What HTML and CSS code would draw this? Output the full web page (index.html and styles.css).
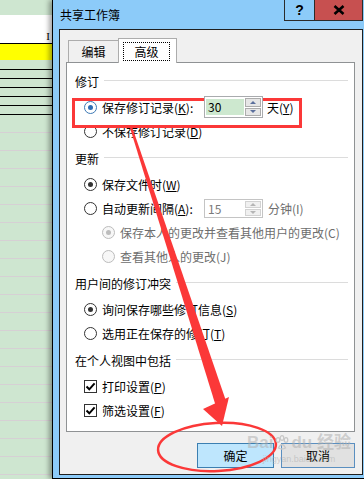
FILE: index.html
```html
<!DOCTYPE html>
<html lang="zh-CN">

<head>
    <meta charset="UTF-8">
    <meta name="viewport" content="width=device-width, initial-scale=1.0">
    <title>共享工作簿</title>
    <link rel="stylesheet" href="styles.css">
</head>

<body>
<div class="screen">

    <!-- worksheet behind the dialog -->
    <div class="sheet">
        <div class="sh-top"></div>
        <div class="sh-name"><span>I</span></div>
        <div class="sh-yellow"></div>
        <div class="sh-row first"></div>
        <div class="sh-row"></div>
        <div class="sh-row"></div>
        <div class="sh-row"></div>
        <div class="sh-row"></div>
        <div class="sh-row"></div>
        <div class="sh-line"></div>
        <div class="sh-line"></div>
        <div class="sh-line"></div>
        <div class="sh-line"></div>
        <div class="sh-line"></div>
        <div class="sh-line"></div>
        <div class="sh-line"></div>
        <div class="sh-line"></div>
        <div class="sh-line"></div>
        <div class="sh-line"></div>
        <div class="sh-line"></div>
        <div class="sh-line"></div>
        <div class="sh-line"></div>
        <div class="sh-line"></div>
        <div class="sh-line"></div>
        <div class="sh-line"></div>
        <div class="sh-line"></div>
        <div class="sh-line"></div>
        <div class="sh-line"></div>
        <div class="sh-line"></div>
    </div>

    <div class="dialog">
        <div class="titlebar">
            <span class="title">共享工作簿</span>
            <span class="tb-btn help">?</span>
            <span class="tb-btn close">
                <svg width="12" height="10" viewBox="0 0 12 10"><path d="M1.5 1 L10.5 9 M10.5 1 L1.5 9" stroke="#000" stroke-width="2.6" /></svg>
            </span>
        </div>

        <div class="client">
            <div class="tabs">
                <div class="tab">编辑</div>
                <div class="tab active"><span class="focus">高级</span></div>
            </div>

            <div class="panel">
                <div class="group first"><span>修订</span><i class="rule"></i></div>
                <div class="opt">
                    <span class="radio on blue"></span>
                    <span class="lbl fixed">保存修订记录(<u>K</u>):</span>
                    <span class="spin">
                        <span class="field green">30</span>
                        <span class="arrows"><span class="sb"><i class="up"></i></span><span class="sb"><i class="down"></i></span></span>
                    </span>
                    <span class="unit">天(<u>Y</u>)</span>
                </div>
                <div class="opt">
                    <span class="radio"></span>
                    <span class="lbl">不保存修订记录(<u>D</u>)</span>
                </div>

                <div class="group"><span>更新</span><i class="rule"></i></div>
                <div class="opt">
                    <span class="radio on"></span>
                    <span class="lbl">保存文件时(<u>W</u>)</span>
                </div>
                <div class="opt">
                    <span class="radio"></span>
                    <span class="lbl fixed">自动更新间隔(<u>A</u>):</span>
                    <span class="spin off">
                        <span class="field">15</span>
                        <span class="arrows"><span class="sb"><i class="up"></i></span><span class="sb"><i class="down"></i></span></span>
                    </span>
                    <span class="unit gray">分钟(I)</span>
                </div>
                <div class="opt sub">
                    <span class="radio on off"></span>
                    <span class="lbl gray">保存本人的更改并查看其他用户的更改(C)</span>
                </div>
                <div class="opt sub">
                    <span class="radio off"></span>
                    <span class="lbl gray">查看其他人的更改(J)</span>
                </div>

                <div class="group"><span>用户间的修订冲突</span><i class="rule"></i></div>
                <div class="opt">
                    <span class="radio on"></span>
                    <span class="lbl">询问保存哪些修订信息(<u>S</u>)</span>
                </div>
                <div class="opt">
                    <span class="radio"></span>
                    <span class="lbl">选用正在保存的修订(<u>T</u>)</span>
                </div>

                <div class="group"><span>在个人视图中包括</span><i class="rule"></i></div>
                <div class="opt">
                    <span class="check"><svg width="11" height="11" viewBox="0 0 11 11"><path d="M1.5 5.5 L4.3 8.3 L9.6 2.4" fill="none" stroke="#000" stroke-width="2" /></svg></span>
                    <span class="lbl">打印设置(<u>P</u>)</span>
                </div>
                <div class="opt">
                    <span class="check"><svg width="11" height="11" viewBox="0 0 11 11"><path d="M1.5 5.5 L4.3 8.3 L9.6 2.4" fill="none" stroke="#000" stroke-width="2" /></svg></span>
                    <span class="lbl">筛选设置(<u>F</u>)</span>
                </div>
            </div>

            <div class="buttons">
                <button class="btn default">确定</button>
                <button class="btn">取消</button>
            </div>
        </div>
    </div>

    <!-- site watermark -->
    <div class="watermark">
        <span class="wm-big">Bai<svg width="16" height="16" viewBox="0 0 16 16"><g fill="none" stroke="#c8c8c8" stroke-width="1.3"><ellipse cx="4" cy="5" rx="1.8" ry="2.3" /><ellipse cx="8" cy="3" rx="1.8" ry="2.3" /><ellipse cx="12" cy="5" rx="1.8" ry="2.3" /><path d="M4.5 13 Q8 6 11.5 13 Q8 15 4.5 13 Z" /></g></svg>du 经验</span>
        <span class="wm-url">jingyan.baidu.com</span>
    </div>

    <!-- red annotation marks -->
    <svg class="marks" width="364" height="479" viewBox="0 0 364 479">
        <rect x="73.5" y="99.5" width="227" height="27" fill="none" stroke="#fb3838" stroke-width="3" />
        <polygon points="130,128 132.5,128 226,401 215.5,405" fill="#fb3838" />
        <polygon points="203,409 229,397 222,426" fill="#fb3838" />
        <ellipse cx="217" cy="447" rx="59" ry="24" fill="none" stroke="#fb3838" stroke-width="2.5" transform="rotate(-3 217 447)" />
    </svg>
</div>
</body>

</html>
```

FILE: styles.css
```css
body {
    margin: 0;
    font-family: "Noto Sans CJK SC", "Microsoft YaHei", sans-serif;
    font-size: 12px;
    color: #000;
    overflow: hidden;
}

.screen {
    position: relative;
    display: flex;
    width: 364px;
    height: 479px;
    overflow: hidden;
    background: #cee6d0;
}

/* worksheet */

.sheet {
    width: 52px;
    flex: none;
    display: flex;
    flex-direction: column;
    background: #cee6d0;
}

.sh-top {
    height: 15px;
}

.sh-name {
    height: 28px;
    background: #fff;
    border-bottom: 1px solid #000;
    display: flex;
    align-items: flex-end;
    justify-content: flex-end;
    font-family: "Liberation Serif", serif;
    font-size: 11px;
    line-height: 14px;
    padding-right: 2px;
}

.sh-yellow {
    height: 16px;
    background: #ffff00;
}

.sh-row {
    height: 8px;
    border-bottom: 1px solid #000;
}

.sh-row.first {
    height: 9px;
}

.sh-line {
    height: 17px;
    flex: none;
    border-bottom: 1px solid #d6d0d4;
}

/* dialog frame */

.dialog {
    flex: none;
    width: 304px;
    padding: 0 6px 3px;
    border-left: 1px solid #000;
    border-right: 1px solid #000;
    border-bottom: 1px solid #000;
    background: #8ccbf9;
    box-shadow: -3px 0 5px rgba(0, 0, 0, 0.35);
    display: flex;
    flex-direction: column;
}

.titlebar {
    height: 29px;
    margin: 0 -6px;
    padding-left: 7px;
    display: flex;
    align-items: flex-start;
}

.title {
    line-height: 29px;
}

.tb-btn {
    height: 20px;
    border: 1px solid #2b2b2b;
    border-top: 0;
    display: flex;
    align-items: center;
    justify-content: center;
}

.help {
    width: 29px;
    margin-left: auto;
    border-right: 0;
    font-family: "Liberation Sans", sans-serif;
    font-weight: bold;
    font-size: 14px;
}

.close {
    width: 47px;
    margin-right: 6px;
    background: #c75050;
}

.client {
    height: 444px;
    border: 1px solid #1f1f1f;
    background: #f0f0f0;
    display: flex;
    flex-direction: column;
}

/* tabs */

.tabs {
    display: flex;
    align-items: flex-end;
    height: 24px;
    margin: 8px 0 0 8px;
}

.tab {
    width: 49px;
    height: 21px;
    line-height: 21px;
    text-align: center;
    border: 1px solid #acacac;
    border-bottom: 0;
    background: #f0f0f0;
}

.tab.active {
    width: 57px;
    height: 24px;
    margin-left: -1px;
    align-self: flex-start;
    background: #fff;
    text-align: left;
    position: relative;
    z-index: 1;
}

.focus {
    display: inline-block;
    width: 45px;
    height: 17px;
    line-height: 17px;
    margin: 3px 0 0 4px;
    text-align: center;
    border: 1px dotted #000;
}

.panel {
    margin: 0 7px 0 6px;
    padding: 8px 0 9px;
    border: 1px solid #8f9294;
    background: #fff;
}

.group {
    display: flex;
    align-items: center;
    height: 20px;
    margin: 5px 0 4px;
    padding-left: 8px;
}

.group.first {
    margin-top: 0;
}

.rule {
    flex: 1;
    height: 1px;
    margin: 0 6px 2px 5px;
    background: #dcdcdc;
}

.opt {
    display: flex;
    align-items: center;
    height: 24px;
    padding-left: 17px;
}

.opt.sub {
    padding-left: 35px;
}

.radio {
    flex: none;
    width: 11px;
    height: 11px;
    margin-right: 5px;
    border: 1px solid #333;
    border-radius: 50%;
    background: #fff;
    display: flex;
    align-items: center;
    justify-content: center;
}

.radio.on::after {
    content: "";
    width: 5px;
    height: 5px;
    border-radius: 50%;
    background: #333;
}

.radio.blue {
    border-color: #3d79b5;
}

.radio.blue::after {
    background: #2e6db4;
}

.radio.off {
    border-color: #bcbcbc;
    background: #f7f7f7;
}

.radio.off::after {
    background: #bcbcbc;
}

.check {
    flex: none;
    width: 11px;
    height: 11px;
    margin-right: 5px;
    border: 1px solid #333;
    background: #fff;
    display: flex;
}

.lbl.fixed {
    width: 102px;
}

.gray {
    color: #6d6d6d;
}

/* spin boxes */

.spin {
    flex: none;
    display: flex;
    width: 57px;
    height: 20px;
    border: 1px solid #a9abae;
    background: #fff;
    position: relative;
    z-index: 2;
}

.spin.off {
    height: 17px;
    border-color: #c4c4c4;
}

.field {
    flex: 1;
    margin: 2px 1px;
    padding-left: 2px;
    line-height: 16px;
}

.field.green {
    background: #cde8cf;
}

.spin.off .field {
    margin: 1px;
    line-height: 15px;
    color: #7a7a7a;
}

.arrows {
    width: 16px;
    display: flex;
    flex-direction: column;
    gap: 1px;
    padding: 1px 1px 1px 0;
}

.sb {
    flex: 1;
    border: 1px solid #acacac;
    background: #e6e6e6;
    display: flex;
    align-items: center;
    justify-content: center;
}

.spin.off .sb {
    border-color: #d2d2d2;
    background: #f0f0f0;
}

.up,
.down {
    width: 0;
    height: 0;
    border-left: 3px solid transparent;
    border-right: 3px solid transparent;
}

.up {
    border-bottom: 3px solid #5b6f9c;
}

.down {
    border-top: 3px solid #5b6f9c;
}

.spin.off .up {
    border-bottom-color: #b5b5b5;
}

.spin.off .down {
    border-top-color: #b5b5b5;
}

.unit {
    margin-left: 4px;
}

.unit.gray {
    margin-left: 5px;
}

/* buttons */

.buttons {
    display: flex;
    justify-content: flex-end;
    gap: 7px;
    margin: 11px 7px 0 0;
}

.btn {
    width: 74px;
    height: 25px;
    padding: 0;
    font-family: "Noto Sans CJK SC", "Microsoft YaHei", sans-serif;
    font-size: 12px;
    color: #000;
    border: 1px solid #5a8fc0;
    background: #e1e1e1;
}

.btn.default {
    width: 77px;
    border-color: #3c7fb1;
    background: #bee6fd;
}

/* overlays */

.watermark {
    position: absolute;
    left: 247px;
    top: 432px;
    display: flex;
    flex-direction: column;
    align-items: center;
    color: rgba(175, 175, 175, 0.55);
    font-family: "Liberation Sans", "Noto Sans CJK SC", sans-serif;
    z-index: 3;
}

.wm-big {
    display: flex;
    align-items: center;
    font-size: 17px;
    font-weight: bold;
    line-height: 22px;
}

.wm-big svg {
    margin: 0 1px;
}

.wm-url {
    font-size: 9px;
    line-height: 10px;
}

.marks {
    position: absolute;
    left: 0;
    top: 0;
    z-index: 1;
    pointer-events: none;
}
```
